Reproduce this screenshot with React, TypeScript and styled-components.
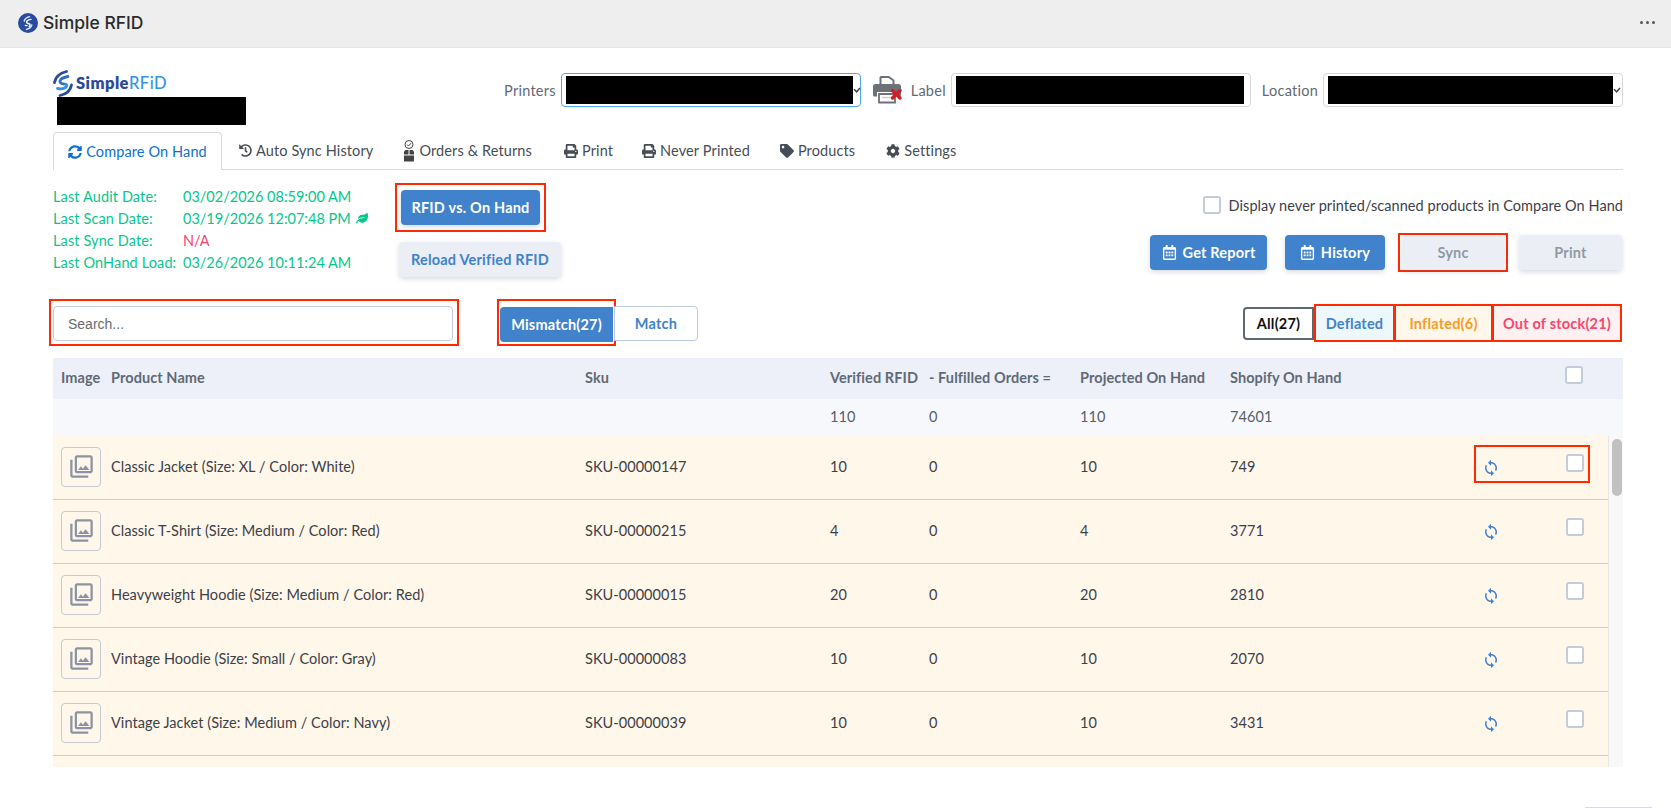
import React from "react";
import styled, { createGlobalStyle } from "styled-components";
import { FaSyncAlt, FaHistory, FaPrint, FaTag, FaCog, FaLeaf, FaRegCalendarAlt } from "react-icons/fa";
import { MdOutlinePhotoLibrary, MdSync } from "react-icons/md";

const Global = createGlobalStyle`
  html, body { margin: 0; padding: 0; background: #fff; overflow: hidden; }
  body { font-family: Lato, "Noto Sans", sans-serif; font-size: 14px; color: #3c4049; }
  * { box-sizing: border-box; }
`;

const RED = "#ff2a00";
const BLUE = "#4182cc";
const GREEN = "#05c78c";
const PINK = "#f9456d";
const ORANGE = "#fb9a26";

const Page = styled.div`height: 808px; overflow: hidden; position: relative;`;

const TopBar = styled.header`
  height: 48px; background: #eeeeee; border-bottom: 1px solid #e4e4e4;
  display: flex; align-items: center; justify-content: space-between; padding: 0 16px 2px 18px;
`;
const Brand = styled.div`display: flex; align-items: center; gap: 5px;`;
const BrandTitle = styled.span`font: 500 17.5px Inter, Roboto, sans-serif; color: #2b2b2b;`;
const Dots = styled.div`display: flex; gap: 3px;`;
const Dot = styled.i`width: 3px; height: 3px; border-radius: 50%; background: #55585c;`;

const Main = styled.main`padding: 21px 48px 0 53px;`;

const Head = styled.div`display: flex; justify-content: space-between; height: 63px;`;
const LogoBlock = styled.div`display: flex; flex-direction: column;`;
const Logo = styled.div`display: flex; align-items: center; height: 28px; gap: 3px;`;
const LogoWord = styled.span`font: 800 16.5px Lato, sans-serif; color: #2b4a9b; letter-spacing: 0.45px;`;
const LogoWordAlt = styled.span`font: 500 16.5px Lato, sans-serif; color: #2e95e8; letter-spacing: 0.5px; margin-left: -3px;`;
const Redact = styled.div<{ $w: number; $h?: number }>`
  width: ${p => p.$w}px; height: ${p => p.$h ?? 28}px; background: #000; flex: none;
`;
const LogoRedact = styled(Redact)`margin-left: 4px;`;

const Selectors = styled.div`display: flex; align-items: center; height: 34px; margin-top: 4px;`;
const FieldLabel = styled.label<{ $gap?: number; $ml?: number }>`
  color: #5f6a76; font-size: 14.5px; letter-spacing: 0.25px; margin: 0 ${p => p.$gap ?? 5}px 0 ${p => p.$ml ?? 0}px;
`;
const SelectBox = styled.div<{ $w: number; $focus?: boolean }>`
  width: ${p => p.$w}px; height: 34px; border-radius: 4px; background: #fff; flex: none;
  border: 1px solid ${p => (p.$focus ? "#4ba8ee" : "#d6d8dc")};
  display: flex; align-items: center; justify-content: space-between; padding: 0 3px 0 4px;
`;
const Chevron = styled.svg`width: 8px; height: 6px; flex: none;`;
const PrinterIcon = styled.svg`width: 30px; height: 30px; margin: 0 8px 0 12px; flex: none;`;

const Tabs = styled.nav`display: flex; height: 38px; border-bottom: 1px solid #d8dbe0; align-items: stretch;`;
const Tab = styled.a<{ $active?: boolean; $ml: number }>`
  display: flex; align-items: center; gap: 4px; margin-left: ${p => p.$ml}px;
  height: ${p => (p.$active ? "38px" : "37px")}; font-size: 14.5px; letter-spacing: 0.12px;
  color: ${p => (p.$active ? "#0f70cf" : "#474d57")};
  ${p => p.$active ? `
    padding: 0 14px; width: 169px; background: #fff; border: 1px solid #d8dbe0; border-bottom: 0;
    border-radius: 4px 4px 0 0; justify-content: center; flex: none;
  ` : ""}
`;

const InfoRow = styled.section`display: flex; height: 129px;`;
const DateGrid = styled.div`
  display: grid; grid-template-columns: 130px auto; grid-auto-rows: 22px; align-items: center;
  padding-top: 15px; width: 342px; color: ${GREEN}; font-size: 14.5px; align-content: start;
`;
const DateLabel = styled.span`letter-spacing: 0.12px;`;
const DateValue = styled.span<{ $bad?: boolean }>`
  color: ${p => (p.$bad ? PINK : GREEN)}; display: flex; align-items: center; gap: 5px;
`;
const MiddleCol = styled.div`display: flex; flex-direction: column; align-items: flex-start; padding-top: 13px;`;
const Mark = styled.div<{ $p: string }>`
  border: 2px solid ${RED}; padding: ${p => p.$p}; display: inline-flex; flex: none;
`;
const Btn = styled.button<{ $w: number; $kind?: "primary" | "soft" | "disabled" }>`
  width: ${p => p.$w}px; height: 35px; border: 0; border-radius: 4px; display: inline-flex; flex: none;
  align-items: center; justify-content: center; gap: 6px; padding: 0;
  font: 700 14.5px Lato, sans-serif; letter-spacing: 0.2px;
  background: ${p => (p.$kind === "soft" || p.$kind === "disabled" ? "#ebeff5" : BLUE)};
  color: ${p => (p.$kind === "soft" ? BLUE : p.$kind === "disabled" ? "#8f99a6" : "#fff")};
  box-shadow: 0 2px 5px rgba(70, 90, 130, 0.22);
`;
const ReloadBtn = styled(Btn)`margin: 10px 0 0 4px;`;
const RightCol = styled.div`flex: 1; display: flex; flex-direction: column; align-items: flex-end; padding-top: 26px;`;
const CheckLine = styled.label`display: flex; align-items: center; gap: 8px; font-size: 14.5px; letter-spacing: 0.06px; color: #3c4049;`;
const Box = styled.span`
  display: inline-block; width: 18px; height: 18px; flex: none; background: #fff;
  border: 2px solid #c4ccdc; border-radius: 3px;
`;
const Actions = styled.div`display: flex; align-items: center; margin: 20px 1px 0 0; height: 37px;`;
const GapBtn = styled(Btn)`margin-right: 18px;`;
const SyncMark = styled(Mark)`margin-right: 11px; margin-left: -5px;`;

const Toolbar = styled.section`display: flex; align-items: flex-start; height: 48px; margin-left: -4px;`;
const SearchInput = styled.input`
  width: 400px; height: 35px; border: 1px solid #c6cbdc; border-radius: 4px; padding: 0 14px;
  font: 14px "Liberation Sans", Arial, sans-serif; color: #666; background: #fff;
  &::placeholder { color: #6b6b6b; opacity: 1; }
`;
const SearchMark = styled(Mark)`margin-right: 38px;`;
const Segment = styled.button<{ $on?: boolean }>`
  height: 35px; width: ${p => (p.$on ? 113 : 84)}px; font: 700 14.5px Lato, sans-serif; letter-spacing: 0.2px; padding: 0;
  background: ${p => (p.$on ? BLUE : "#fff")}; color: ${p => (p.$on ? "#fff" : BLUE)};
  border: ${p => (p.$on ? "0" : "1px solid #bdcbe2")};
  border-radius: ${p => (p.$on ? "4px 0 0 4px" : "0 4px 4px 0")};
`;
const MatchSeg = styled(Segment)`margin: 7px 0 0 -2px;`;
const Filters = styled.div`margin-left: auto; display: flex; align-items: flex-start; margin-right: 2px;`;
const FilterAll = styled.div`
  width: 71px; height: 33px; margin-top: 8px; border: 2px solid #5d6874; border-radius: 4px 0 0 4px;
  display: flex; align-items: center; justify-content: center; font: 700 14.5px Lato, sans-serif; letter-spacing: 0.2px; color: #111;
`;
const Filter = styled.div<{ $w: number; $c: string; $bg: string }>`
  width: ${p => p.$w}px; height: 38px; margin-top: 5px; margin-right: -1px; border: 2px solid ${RED};
  display: flex; align-items: center; justify-content: center;
  font: 700 14.5px Lato, sans-serif; letter-spacing: 0.2px; color: ${p => p.$c}; background: ${p => p.$bg};
`;

const COLS = "50px 474px 245px 99px 151px 150px 1fr";
const HeadRow = styled.div`
  display: grid; grid-template-columns: ${COLS}; align-items: center;
  height: 41px; margin-top: 11px; background: #edf0f9; color: #5f6a76; font-weight: 700; font-size: 14.5px;
  letter-spacing: 0.08px; position: relative; padding: 0 0 2px 8px;
`;
const TotalRow = styled(HeadRow)`
  height: 37px; margin-top: 0; background: #f7f8fb; font-weight: 400; color: #565f6b;
`;
const HeadCheck = styled(Box)`position: absolute; left: 1512px; top: 8px;`;
const ScrollArea = styled.div`display: flex; height: 331px; overflow: hidden;`;
const Rows = styled.div`flex: 1; min-width: 0;`;
const Row = styled.div`
  display: grid; grid-template-columns: ${COLS}; align-items: center;
  height: 64px; background: #fff7ea; border-bottom: 1px solid #d8cbc2; padding: 0 0 2px 8px; position: relative;
  color: #3c4049; font-size: 14.5px; letter-spacing: 0.05px;
`;
const Thumb = styled.div`
  width: 40px; height: 40px; border: 1px solid #c6cad2; border-radius: 4px; display: flex;
  align-items: center; justify-content: center; color: #8b94a2; font-size: 27px; background: #fff7ea;
`;
const RowSync = styled.span`
  position: absolute; left: 1429px; top: 23px; color: ${BLUE}; font-size: 18px; line-height: 0;
`;
const RowCheck = styled(Box)`position: absolute; left: 1513px; top: 18px;`;
const RowMark = styled.div`
  position: absolute; left: 1421px; top: 9px; width: 116px; height: 38px; border: 2px solid ${RED};
`;
const Track = styled.div`width: 15px; background: #f8f8f8; border-left: 1px solid #e6e6e6; padding: 3px 1px 0 3px;`;
const ScrollThumb = styled.div`height: 57px; background: #c1c1c1; border-radius: 5px;`;
const Corner = styled.div`
  position: absolute; left: 1585px; top: 807px; width: 67px; height: 2px; background: #d8dbe0;
`;

const Mono = styled.svg`flex: none;`;

const BrandIcon = () => (
  <Mono width="20" height="20" viewBox="0 0 20 20">
    <circle cx="10" cy="10" r="10" fill="#2a4b9f" />
    <path d="M11.6 3.6C8.8 4.4 6.6 6 6.2 8" fill="none" stroke="#dfe8f8" strokeWidth="1.4" strokeLinecap="round" />
    <path d="M13 6.4C10.8 6.8 8.8 7.6 8.6 9c-.2 1 1 1.6 2.4 1.8 1.4.3 1.5 1.7.2 2.6" fill="none" stroke="#fff" strokeWidth="1.4" strokeLinecap="round" />
    <path d="M7.4 12.4c.6.3 1 .3 1.6.2" fill="none" stroke="#fff" strokeWidth="1.4" strokeLinecap="round" />
    <path d="M8.4 16.4c2.8-.8 5-2.4 5.4-4.4" fill="none" stroke="#dfe8f8" strokeWidth="1.4" strokeLinecap="round" />
  </Mono>
);
const LogoMark = () => (
  <Mono width="20" height="27" viewBox="0 0 20 27">
    <path d="M13.5 1.5C7.5 3 2.5 6.5 1.5 12.5" fill="none" stroke="#2b4a9b" strokeWidth="2.8" strokeLinecap="round" />
    <path d="M15 6.5C11 7.2 7.6 8.6 7 11c-.4 1.8 1.6 2.8 4 3" fill="none" stroke="#2e6fc0" strokeWidth="2.8" strokeLinecap="round" />
    <path d="M4.5 18.5c3.4.6 7.4 0 8.8-1.8.8-1 .6-2-.4-2.6" fill="none" stroke="#2e95e8" strokeWidth="2.8" strokeLinecap="round" />
    <path d="M7 25.5c5.5-1.2 10.5-4.5 11.5-10.5" fill="none" stroke="#2b4a9b" strokeWidth="2.8" strokeLinecap="round" />
  </Mono>
);
const ChevronIcon = () => (
  <Chevron viewBox="0 0 8 6"><path d="M1 2.2 3.6 4.8 7 1" fill="none" stroke="#444" strokeWidth="1.5" /></Chevron>
);
const OrdersIcon = () => (
  <Mono width="12" height="22" viewBox="0 0 12 22">
    <circle cx="6" cy="4.5" r="4" fill="none" stroke="#444" strokeWidth="1" />
    <path d="M4 4.5 5.5 6 8 3.2" fill="none" stroke="#444" strokeWidth="1" />
    <path d="M1 11.5 2.5 10h7L11 11.5V21.5H1z" fill="#444" />
    <path d="M1 15h10" stroke="#fff" strokeWidth="1" />
    <path d="M6 10v5" stroke="#fff" strokeWidth="1" />
  </Mono>
);
const BrokenPrinter = () => (
  <PrinterIcon viewBox="0 0 30 30">
    <path d="M6.5 9V2.5a1.5 1.5 0 0 1 1.5-1.5h8l5.5 4V9h-2V5.8L15.4 3H8.5v6z" fill="#6d7278" />
    <path d="M2.5 9h23A2.5 2.5 0 0 1 28 11.500V20a1.500 1.500 0 0 1-1.500 1.500H24V17H4v4.500H1.500A1.500 1.500 0 0 1 0 20v-8.500A2.500 2.500 0 0 1 2.500 9z" fill="#6d7278" />
    <path d="M6 19h16v8.500H6z" fill="#fff" stroke="#6d7278" strokeWidth="1.800" />
    <path d="M9 22.500h10" stroke="#c9ccd0" strokeWidth="1.400" />
    <path d="M19.500 15.500l7.500 7.500M27 15.500l-7.500 7.500" stroke="#cf1f27" strokeWidth="3.400" strokeLinecap="round" />
  </PrinterIcon>
);

const products = [
  ["Classic Jacket (Size: XL / Color: White)", "SKU-00000147", "10", "0", "10", "749"],
  ["Classic T-Shirt (Size: Medium / Color: Red)", "SKU-00000215", "4", "0", "4", "3771"],
  ["Heavyweight Hoodie (Size: Medium / Color: Red)", "SKU-00000015", "20", "0", "20", "2810"],
  ["Vintage Hoodie (Size: Small / Color: Gray)", "SKU-00000083", "10", "0", "10", "2070"],
  ["Vintage Jacket (Size: Medium / Color: Navy)", "SKU-00000039", "10", "0", "10", "3431"],
];

export default function App() {
  return (
    <Page>
      <Global />
      <TopBar>
        <Brand><BrandIcon /><BrandTitle>Simple RFID</BrandTitle></Brand>
        <Dots><Dot /><Dot /><Dot /></Dots>
      </TopBar>
      <Main>
        <Head>
          <LogoBlock>
            <Logo><LogoMark /><LogoWord>Simple</LogoWord><LogoWordAlt>RFiD</LogoWordAlt></Logo>
            <LogoRedact $w={189} />
          </LogoBlock>
          <Selectors>
            <FieldLabel>Printers</FieldLabel>
            <SelectBox $w={300} $focus><Redact $w={287} /><ChevronIcon /></SelectBox>
            <BrokenPrinter />
            <FieldLabel>Label</FieldLabel>
            <SelectBox $w={300}><Redact $w={288} /></SelectBox>
            <FieldLabel $ml={11}>Location</FieldLabel>
            <SelectBox $w={300}><Redact $w={285} /><ChevronIcon /></SelectBox>
          </Selectors>
        </Head>

        <Tabs>
          <Tab $active $ml={0}><FaSyncAlt size={14} />Compare On Hand</Tab>
          <Tab $ml={17}><FaHistory size={13} />Auto Sync History</Tab>
          <Tab $ml={30}><OrdersIcon />Orders &amp; Returns</Tab>
          <Tab $ml={32}><FaPrint size={14} />Print</Tab>
          <Tab $ml={29}><FaPrint size={14} />Never Printed</Tab>
          <Tab $ml={30}><FaTag size={14} />Products</Tab>
          <Tab $ml={31}><FaCog size={14} />Settings</Tab>
        </Tabs>

        <InfoRow>
          <DateGrid>
            <DateLabel>Last Audit Date:</DateLabel><DateValue>03/02/2026 08:59:00 AM</DateValue>
            <DateLabel>Last Scan Date:</DateLabel><DateValue>03/19/2026 12:07:48 PM <FaLeaf size={12} /></DateValue>
            <DateLabel>Last Sync Date:</DateLabel><DateValue $bad>N/A</DateValue>
            <DateLabel>Last OnHand Load:</DateLabel><DateValue>03/26/2026 10:11:24 AM</DateValue>
          </DateGrid>
          <MiddleCol>
            <Mark $p="5px 4px"><Btn $w={139}>RFID vs. On Hand</Btn></Mark>
            <ReloadBtn $w={162} $kind="soft">Reload Verified RFID</ReloadBtn>
          </MiddleCol>
          <RightCol>
            <CheckLine><Box />Display never printed/scanned products in Compare On Hand</CheckLine>
            <Actions>
              <GapBtn $w={117}><FaRegCalendarAlt size={15} />Get Report</GapBtn>
              <GapBtn $w={100}><FaRegCalendarAlt size={15} />History</GapBtn>
              <SyncMark $p="0 2px"><Btn $w={102} $kind="disabled">Sync</Btn></SyncMark>
              <Btn $w={103} $kind="disabled">Print</Btn>
            </Actions>
          </RightCol>
        </InfoRow>

        <Toolbar>
          <SearchMark $p="5px 4px 3px 2px"><SearchInput placeholder="Search..." readOnly /></SearchMark>
          <Mark $p="6px 1px 2px 1px"><Segment $on>Mismatch(27)</Segment></Mark>
          <MatchSeg>Match</MatchSeg>
          <Filters>
            <FilterAll>All(27)</FilterAll>
            <Filter $w={81} $c={BLUE} $bg="#edf8fc">Deflated</Filter>
            <Filter $w={99} $c={ORANGE} $bg="#fff7ea">Inflated(6)</Filter>
            <Filter $w={130} $c={PINK} $bg="#fff0f2">Out of stock(21)</Filter>
          </Filters>
        </Toolbar>

        <HeadRow>
          <span>Image</span><span>Product Name</span><span>Sku</span><span>Verified RFID</span>
          <span>- Fulfilled Orders =</span><span>Projected On Hand</span><span>Shopify On Hand</span>
          <HeadCheck />
        </HeadRow>
        <TotalRow>
          <span /><span /><span /><span>110</span><span>0</span><span>110</span><span>74601</span>
        </TotalRow>
        <ScrollArea>
          <Rows>
            {products.map((p, i) => (
              <Row key={p[1]}>
                <Thumb><MdOutlinePhotoLibrary /></Thumb>
                {p.map((v, j) => <span key={j}>{v}</span>)}
                <RowSync><MdSync /></RowSync>
                <RowCheck />
                {i === 0 && <RowMark />}
              </Row>
            ))}
            <Row />
          </Rows>
          <Track><ScrollThumb /></Track>
        </ScrollArea>
      </Main>
      <Corner />
    </Page>
  );
}
